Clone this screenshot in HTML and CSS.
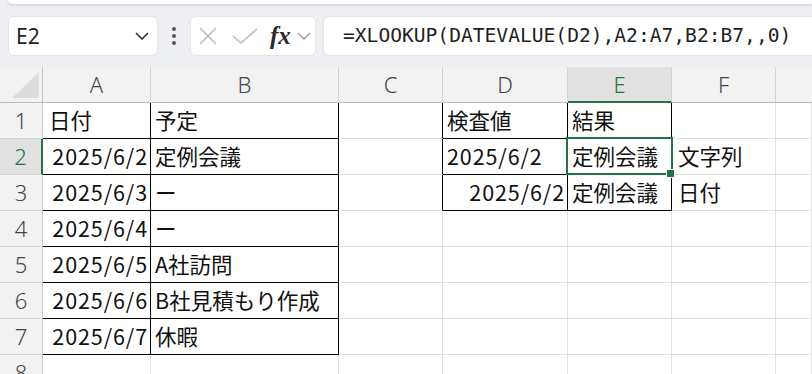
FILE: index.html
```html
<!DOCTYPE html>
<html lang="ja">

<head>
    <meta charset="UTF-8">
    <title>XLOOKUP DATEVALUE</title>
    <link rel="stylesheet" href="styles.css">
</head>

<body>
    <div class="ribbon-edge"></div>

    <!-- Name box + formula bar -->
    <div class="toolbar">
        <div class="name-box">
            <span>E2</span>
            <svg width="14" height="8" viewBox="0 0 14 8"><path d="M1 1l6 6 6-6" fill="none" stroke="#333" stroke-width="1.6"/></svg>
        </div>
        <div class="grip"><i></i><i></i><i></i></div>
        <div class="fx-box">
            <svg class="ic" width="20" height="20" viewBox="0 0 20 20"><path d="M2 2l16 16M18 2L2 18" stroke="#bdbdbd" stroke-width="1.6" fill="none"/></svg>
            <svg class="ic" width="26" height="16" viewBox="0 0 26 16"><path d="M1 8l8 7L25 1" stroke="#bdbdbd" stroke-width="1.6" fill="none"/></svg>
            <span class="fx">fx</span>
            <svg width="14" height="8" viewBox="0 0 14 8"><path d="M1 1l6 6 6-6" fill="none" stroke="#9a9a9a" stroke-width="1.4"/></svg>
        </div>
        <div class="formula">=XLOOKUP(DATEVALUE(D2),A2:A7,B2:B7,,0)</div>
    </div>

    <!-- Sheet grid -->
    <div class="sheet">
        <div class="corner"><svg width="43" height="35" viewBox="0 0 43 35"><polygon points="12,31 39,31 39,5" fill="#dcdcdc"/></svg></div>
        <div class="ch kb">A</div>
        <div class="ch kb">B</div>
        <div class="ch">C</div>
        <div class="ch kb">D</div>
        <div class="ch sel">E</div>
        <div class="ch">F</div>
        <div class="ch last"></div>

        <div class="rh kr">1</div>
        <div class="c kr kb jp">日付</div>
        <div class="c kr kb">予定</div>
        <div class="c kr"></div>
        <div class="c kr kb">検査値</div>
        <div class="c kr kb">結果</div>
        <div class="c"></div>
        <div class="c"></div>

        <div class="rh sel">2</div>
        <div class="c kr kb num">2025/6/2</div>
        <div class="c kr kb">定例会議</div>
        <div class="c kr"></div>
        <div class="c kr kb dt">2025/6/2</div>
        <div class="c kr kb active">定例会議</div>
        <div class="c f3">文字列</div>
        <div class="c"></div>

        <div class="rh kr">3</div>
        <div class="c kr kb num">2025/6/3</div>
        <div class="c kr kb">ー</div>
        <div class="c kr"></div>
        <div class="c kr kb num">2025/6/2</div>
        <div class="c kr kb">定例会議</div>
        <div class="c f3">日付</div>
        <div class="c"></div>

        <div class="rh kr">4</div>
        <div class="c kr kb num">2025/6/4</div>
        <div class="c kr kb">ー</div>
        <div class="c"></div>
        <div class="c"></div>
        <div class="c"></div>
        <div class="c"></div>
        <div class="c"></div>

        <div class="rh kr">5</div>
        <div class="c kr kb num">2025/6/5</div>
        <div class="c kr kb">A社訪問</div>
        <div class="c"></div>
        <div class="c"></div>
        <div class="c"></div>
        <div class="c"></div>
        <div class="c"></div>

        <div class="rh kr">6</div>
        <div class="c kr kb num">2025/6/6</div>
        <div class="c kr kb">B社見積もり作成</div>
        <div class="c"></div>
        <div class="c"></div>
        <div class="c"></div>
        <div class="c"></div>
        <div class="c"></div>

        <div class="rh kr">7</div>
        <div class="c kr kb num">2025/6/7</div>
        <div class="c kr kb">休暇</div>
        <div class="c"></div>
        <div class="c"></div>
        <div class="c"></div>
        <div class="c"></div>
        <div class="c"></div>

        <div class="rh">8</div>
        <div class="c"></div>
        <div class="c"></div>
        <div class="c"></div>
        <div class="c"></div>
        <div class="c"></div>
        <div class="c"></div>
        <div class="c"></div>
    </div>
</body>

</html>
```

FILE: styles.css
```css
/* Page */
html, body {
    margin: 0;
    padding: 0;
    height: 374px;
    overflow: hidden;
}

body {
    background-color: #edeff2;
    font-family: "Noto Sans", "Noto Sans CJK JP", sans-serif;
    color: #222;
}

.ribbon-edge {
    height: 4px;
    margin-left: 8px;
    background-color: #fff;
    border-radius: 0 0 0 8px;
    box-shadow: 0 1px 3px rgba(0, 0, 0, 0.15);
}

/* Toolbar row */
.toolbar {
    display: flex;
    align-items: flex-start;
    height: 63px;
    padding-top: 12px;
    box-sizing: border-box;
}

.name-box,
.fx-box,
.formula {
    height: 40px;
    box-sizing: border-box;
    background-color: #fff;
    border: 1px solid #e3e5e8;
    border-radius: 6px;
}

.name-box {
    margin-left: 8px;
    width: 150px;
    display: flex;
    align-items: center;
    justify-content: space-between;
    padding: 0 8px 0 7px;
    font-size: 21px;
    color: #1f1f1f;
}

.grip {
    width: 32px;
    height: 40px;
    display: flex;
    flex-direction: column;
    align-items: center;
    justify-content: center;
    gap: 3px;
}

.grip i {
    width: 4px;
    height: 4px;
    border-radius: 50%;
    background-color: #555;
}

.fx-box {
    width: 126px;
    display: flex;
    align-items: center;
    padding-left: 7px;
}

.fx-box .ic {
    margin-right: 14px;
}

.fx-box .ic + .ic {
    margin-right: 12px;
}

.fx {
    font-family: "Liberation Serif", serif;
    font-style: italic;
    font-weight: bold;
    font-size: 25px;
    color: #2a2a2a;
    margin-right: 6px;
}

.formula {
    flex: 1;
    margin-left: 7px;
    margin-right: -10px;
    border-radius: 6px 0 0 6px;
    padding-left: 19px;
    font-family: "DejaVu Sans Mono", monospace;
    font-size: 19.6px;
    line-height: 38px;
    color: #1f1f1f;
    white-space: nowrap;
}

/* Sheet */
.sheet {
    display: grid;
    grid-template-columns: 43px 108px 188px 104px 125px 104px 104px 1fr;
    grid-auto-rows: 36px;
    background-color: #fff;
}

.sheet > div {
    box-sizing: border-box;
    border-right: 1px solid #e1e1e1;
    border-bottom: 1px solid #e1e1e1;
    white-space: nowrap;
}

.corner {
    background-color: #f2f2f2;
    border-right-color: #c6c6c6 !important;
    border-bottom-color: #bdbdbd !important;
}

.corner svg {
    display: block;
}

.ch,
.rh {
    background-color: #f2f2f2;
    text-align: center;
    font-size: 22px;
    font-weight: 300;
    line-height: 35px;
    color: #444;
}

.ch {
    border-right-color: #d4d4d4 !important;
    border-bottom-color: #bdbdbd !important;
}

.ch.last {
    border-right: none !important;
}

.rh {
    border-right-color: #c6c6c6 !important;
    border-bottom-color: #d4d4d4 !important;
}

.ch.sel {
    background-color: #e1e1e1;
    color: #217346;
    border-bottom: 2px solid #217346 !important;
}

.rh.sel {
    background-color: #e1e1e1;
    color: #217346;
    border-right: 2px solid #217346 !important;
}

.c {
    font-family: "Noto Sans CJK JP", sans-serif;
    font-size: 21.5px;
    line-height: 33px;
    padding: 0 3px 0 4px;
    color: #111;
}

.c.num,
.c.dt {
    letter-spacing: 0.9px;
}

.c.num {
    text-align: right;
    padding-right: 2px;
}

.c.jp,
.c.f3 {
    padding-left: 6px;
}

.sheet > .kr {
    border-right-color: #000;
}

.sheet > .kb {
    border-bottom-color: #000;
}

/* Active cell */
.active {
    position: relative;
}

.active::before {
    content: "";
    position: absolute;
    top: -2px;
    left: -2px;
    width: 107px;
    height: 38px;
    box-sizing: border-box;
    border: 2px solid #217346;
}

.active::after {
    content: "";
    position: absolute;
    left: 99px;
    top: 31px;
    width: 7px;
    height: 7px;
    background-color: #217346;
    box-shadow: 0 0 0 1px #fff;
}
```
